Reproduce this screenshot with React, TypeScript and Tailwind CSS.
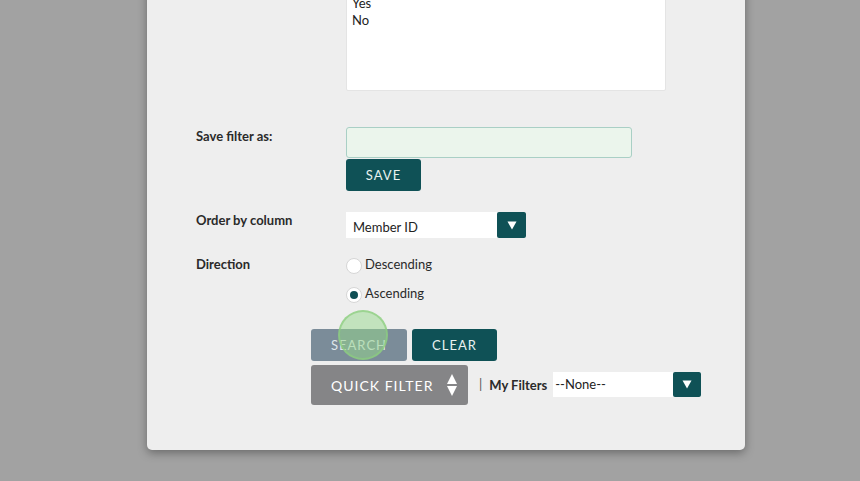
import React from "react";

const font = { fontFamily: "Lato, 'Open Sans', sans-serif" };

function Caret() {
  return (
    <svg width="10" height="9" viewBox="0 0 10 9">
      <path d="M0.5 0.5 H9.5 L5 8.5 Z" fill="#ffffff" />
    </svg>
  );
}

function Radio({ checked, label }: { checked?: boolean; label: string }) {
  return (
    <div className="flex items-center h-[17px]">
      <span className="w-[16px] h-[16px] rounded-full bg-white border border-[#d6d6d6] flex items-center justify-center mt-[2px]">
        {checked && <span className="w-[8px] h-[8px] rounded-full bg-[#0f4f54]" />}
      </span>
      <span className="ml-[3px] text-[13px] text-[#2a2a2a]">{label}</span>
    </div>
  );
}

export default function App() {
  return (
    <div className="w-[860px] h-[481px] overflow-hidden bg-[#a2a2a2]" style={font}>
      <div className="ml-[147px] w-[598px] h-[480px] -mt-[30px] bg-[#eeeeee] rounded-[5px] shadow-[0_3px_10px_rgba(0,0,0,0.35)] relative">
        <div className="pl-[199px] pt-[22px]">
          <div className="w-[320px] h-[99px] bg-white border border-[#e4e4e4] rounded-[2px] px-[5px] pt-[2px] text-[13px] leading-[17px] text-[#222]">
            <div>Yes</div>
            <div>No</div>
          </div>
        </div>

        <div className="flex pl-[49px] mt-[36px]">
          <div className="w-[150px] pt-[1px] text-[13px] leading-[17px] font-bold text-[#2a2a2a]">Save filter as:</div>
          <div className="flex flex-col">
            <div className="w-[286px] h-[31px] bg-[#ebf5ec] border border-[#a9cfc5] rounded-[3px]" />
            <button className="mt-[1px] w-[75px] h-[32px] bg-[#0f5156] rounded-[3px] text-[#e8f2f0] text-[13px] tracking-[1px] pt-[2px]">SAVE</button>
          </div>
        </div>

        <div className="flex pl-[49px] mt-[21px]">
          <div className="w-[150px] text-[13px] leading-[17px] font-bold text-[#2a2a2a]">Order by column</div>
          <div className="w-[180px] h-[26px] bg-white flex items-center">
            <span className="flex-1 pl-[7px] pt-[5px] text-[13px] text-[#222]">Member ID</span>
            <span className="w-[29px] h-[26px] bg-[#0f5156] rounded-[2px] flex items-center justify-center"><Caret /></span>
          </div>
        </div>

        <div className="flex pl-[49px] mt-[18px]">
          <div className="w-[150px] text-[13px] leading-[17px] font-bold text-[#2a2a2a]">Direction</div>
          <div className="flex flex-col gap-[12px] mt-[0px]">
            <Radio label="Descending" />
            <Radio checked label="Ascending" />
          </div>
        </div>

        <div className="flex pl-[164px] mt-[27px] gap-[5px]">
          <button className="w-[96px] h-[32px] bg-[#7b8c99] rounded-[3px] text-[#dfe6ea] text-[13px] tracking-[1px] pt-[2px]">SEARCH</button>
          <button className="w-[85px] h-[32px] bg-[#0f5156] rounded-[3px] text-[#e8f2f0] text-[13px] tracking-[1px] pt-[2px]">CLEAR</button>
        </div>

        <div className="flex items-center pl-[164px] mt-[4px]">
          <button className="w-[157px] h-[40px] bg-[#858587] rounded-[3px] flex items-center pl-[20px] pr-[10px] text-white text-[14px] tracking-[1px]">
            <span className="flex-1 text-left">QUICK FILTER</span>
            <svg width="12" height="24" viewBox="0 0 12 24">
              <path d="M6 1 L11 11 H1 Z" fill="#ffffff" />
              <path d="M1 13 H11 L6 23 Z" fill="#ffffff" />
            </svg>
          </button>
          <span className="ml-[11px] text-[13px] text-[#555]">|</span>
          <span className="ml-[7px] pt-[2px] text-[13px] font-bold text-[#2a2a2a]">My Filters</span>
          <div className="ml-[6px] w-[148px] h-[25px] bg-white flex items-center -mt-[2px]">
            <span className="flex-1 pl-[2px] pt-[2px] text-[13px] text-[#222]">--None--</span>
            <span className="w-[28px] h-[25px] bg-[#0f5156] rounded-[2px] flex items-center justify-center"><Caret /></span>
          </div>
        </div>

        <div className="absolute left-[191px] top-[340px] w-[50px] h-[50px] rounded-full bg-[rgba(150,215,140,0.5)] border-2 border-[rgba(140,205,125,0.7)]" />
      </div>
    </div>
  );
}
